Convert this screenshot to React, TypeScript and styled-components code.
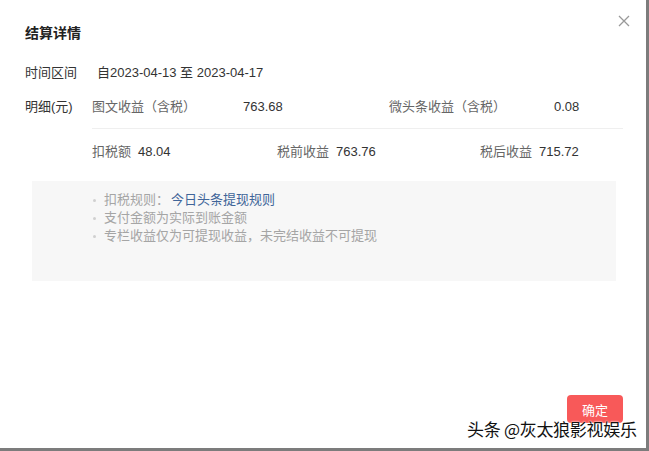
import React from "react";
import styled, { createGlobalStyle } from "styled-components";

const Global = createGlobalStyle`
  html, body { margin: 0; padding: 0; background: #fff; }
  body { font-family: "Liberation Sans", Arial, "Noto Sans CJK SC", sans-serif; }
`;

const Dialog = styled.div`
  position: relative;
  box-sizing: border-box;
  width: 649px;
  height: 451px;
  background: #fff;
  border-right: 3px solid #7c7c7c;
  border-bottom: 3px solid #7c7c7c;
  padding: 24px 23px 0 25px;
  display: flex;
  flex-direction: column;
  color: #333;
  font-size: 13px;
`;

const Title = styled.div`
  font-size: 14px;
  font-weight: bold;
  line-height: 18px;
  color: #222;
`;

const Close = styled.button`
  position: absolute;
  top: 14px;
  right: 15px;
  width: 14px;
  height: 14px;
  padding: 0;
  border: none;
  background: none;
  display: flex;
`;

const Row = styled.div<{ $mt: number; $align?: string }>`
  display: flex;
  align-items: ${(p) => p.$align ?? "center"};
  margin-top: ${(p) => p.$mt}px;
  line-height: 18px;
`;

const Label = styled.div<{ $w: number }>`
  width: ${(p) => p.$w}px;
  flex: none;
  color: #333;
`;

const Detail = styled.div`
  flex: 1;
  display: flex;
  flex-direction: column;
`;

const Grid = styled.div<{ $cols: string }>`
  display: grid;
  grid-template-columns: ${(p) => p.$cols};
  line-height: 18px;
`;

const Muted = styled.span`
  color: #666;
`;

const Value = styled.span`
  color: #333;
`;

const Divider = styled.div`
  height: 1px;
  background: #efefef;
  margin: 12px 0 14px;
`;

const Pair = styled.div`
  display: flex;
  gap: 7px;
`;

const Notice = styled.div`
  margin: 20px 7px 0 7px;
  height: 100px;
  box-sizing: border-box;
  background: #f7f7f7;
  padding: 10px 0 0 61px;
  display: flex;
  flex-direction: column;
`;

const NoticeItem = styled.div`
  display: flex;
  align-items: center;
  line-height: 18px;
  color: #a5a5a5;
  font-size: 13px;
  &::before {
    content: "";
    width: 3px;
    height: 3px;
    border-radius: 50%;
    background: #d0d0d0;
    margin-right: 8px;
  }
`;

const Link = styled.span`
  color: #406599;
  margin-left: 2px;
`;

const Footer = styled.div`
  margin-top: auto;
  display: flex;
  justify-content: flex-end;
  padding-bottom: 25px;
`;

const Button = styled.button`
  width: 56px;
  height: 28px;
  border: none;
  border-radius: 4px;
  background: #f85959;
  color: #fff;
  font-family: "Noto Sans CJK SC", sans-serif;
  font-size: 13px;
  padding: 0;
`;

const Watermark = styled.div`
  position: absolute;
  left: 467px;
  top: 418px;
  font-family: "Noto Sans CJK SC", sans-serif;
  font-size: 17px;
  line-height: 22px;
  color: #111;
  letter-spacing: -0.3px;
  text-shadow: 0 0 2px #fff, 0 0 2px #fff, 1px 1px 1px #fff;
`;

export default function App() {
  return (
    <>
      <Global />
      <Dialog>
        <Title>结算详情</Title>
        <Close aria-label="close">
          <svg width="14" height="14" viewBox="0 0 14 14">
            <path d="M2 2 L12 12 M12 2 L2 12" stroke="#999" strokeWidth="1.3" fill="none" />
          </svg>
        </Close>
        <Row $mt={22}>
          <Label $w={72}>时间区间</Label>
          <span>自2023-04-13 至 2023-04-17</span>
        </Row>
        <Row $mt={16} $align="flex-start">
          <Label $w={67}>明细(元)</Label>
          <Detail>
            <Grid $cols="151px 146px 165px 1fr">
              <Muted>图文收益（含税）</Muted>
              <Value>763.68</Value>
              <Muted>微头条收益（含税）</Muted>
              <Value>0.08</Value>
            </Grid>
            <Divider />
            <Grid $cols="185px 203px 1fr">
              <Pair>
                <Muted>扣税额</Muted>
                <Value>48.04</Value>
              </Pair>
              <Pair>
                <Muted>税前收益</Muted>
                <Value>763.76</Value>
              </Pair>
              <Pair>
                <Muted>税后收益</Muted>
                <Value>715.72</Value>
              </Pair>
            </Grid>
          </Detail>
        </Row>
        <Notice>
          <NoticeItem>
            扣税规则：<Link>今日头条提现规则</Link>
          </NoticeItem>
          <NoticeItem>支付金额为实际到账金额</NoticeItem>
          <NoticeItem>专栏收益仅为可提现收益，未完结收益不可提现</NoticeItem>
        </Notice>
        <Footer>
          <Button>确定</Button>
        </Footer>
        <Watermark>头条 @灰太狼影视娱乐</Watermark>
      </Dialog>
    </>
  );
}
